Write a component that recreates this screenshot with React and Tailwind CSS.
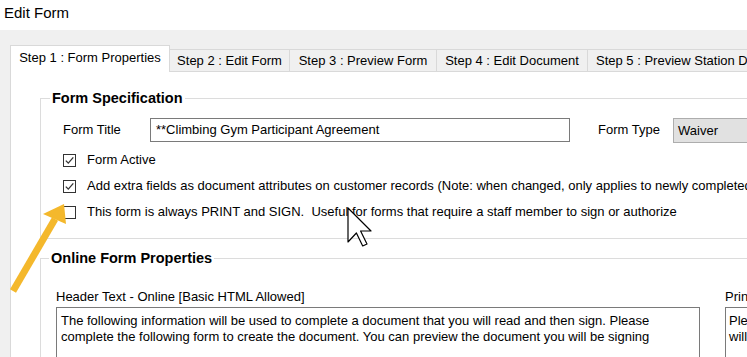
import React from 'react'

const TABS = [
  { label: 'Step 2 : Edit Form', w: 'w-[120px] text-center' },
  { label: 'Step 3 : Preview Form', w: 'w-[147px] text-center' },
  { label: 'Step 4 : Edit Document', w: 'w-[151px] text-center' },
  { label: 'Step 5 : Preview Station Document', w: 'w-[240px] text-left pl-[8px]' },
]

function Check({ checked }) {
  return (
    <span className="w-[13px] h-[13px] border border-[#333333] bg-white shrink-0 flex items-center justify-center">
      {checked && (
        <svg width="11" height="11" viewBox="0 0 11 11">
          <path d="M1.8 5.6 L4.3 8.1 L9.3 2.4" fill="none" stroke="#333333" strokeWidth="1.3" />
        </svg>
      )}
    </span>
  )
}

function CheckRow({ checked, children }) {
  return (
    <div className="h-[26px] flex items-center">
      <Check checked={checked} />
      <span className="ml-[11px] whitespace-nowrap">{children}</span>
    </div>
  )
}

export default function App() {
  return (
    <div className="relative w-[747px] h-[357px] overflow-hidden bg-white flex flex-col text-[13px] text-black font-['Liberation_Sans',Arial,sans-serif]">
      {/* window title */}
      <div className="h-[30px] pl-[4px] pt-[4px] text-[15px] leading-[18px] shrink-0">Edit Form</div>

      <div className="flex-1 bg-[#f0f0f0] pl-[10px] pt-[15px] flex flex-col">
        {/* tab strip */}
        <div className="flex items-end h-[26px] shrink-0">
          <div className="relative z-10 w-[160px] h-[27px] shrink-0 mb-[-1px] bg-white border border-b-0 border-[#d9d9d9] pt-[4px] leading-[16px] text-center whitespace-nowrap">
            Step 1 : Form Properties
          </div>
          {TABS.map(t => (
            <div
              key={t.label}
              className={`${t.w} h-[22px] shrink-0 bg-[#f0f0f0] border border-l-0 border-b-0 border-[#d9d9d9] pt-[3px] leading-[16px] whitespace-nowrap`}
            >
              {t.label}
            </div>
          ))}
        </div>

        {/* tab panel */}
        <div className="flex-1 bg-white border-t border-l border-[#d9d9d9] pl-[29px]">
          <fieldset className="mt-[18px] border-t border-l border-b border-[#dcdcdc]">
            <legend className="ml-[9px] px-[2px] text-[14.5px] font-bold leading-[16px]">Form Specification</legend>
            <div className="pt-[12px] pl-[22px] pb-[13px]">
              <div className="flex items-center h-[24px] whitespace-nowrap">
                <span className="w-[87px] shrink-0">Form Title</span>
                <div className="w-[420px] h-[24px] shrink-0 border border-[#7a7a7a] px-[5px] leading-[22px]">
                  **Climbing Gym Participant Agreement
                </div>
                <span className="ml-[28px] w-[75px] shrink-0">Form Type</span>
                <div className="w-[100px] h-[25px] shrink-0 bg-[#e1e1e1] border border-[#adadad] pl-[4px] leading-[23px]">
                  Waiver
                </div>
              </div>
              <div className="mt-[5px]">
                <CheckRow checked>Form Active</CheckRow>
                <CheckRow checked>
                  Add extra fields as document attributes on customer records (Note: when changed, only applies to newly completed documents)
                </CheckRow>
                <CheckRow>
                  This form is always PRINT and SIGN.&nbsp; Useful for forms that require a staff member to sign or authorize
                </CheckRow>
              </div>
            </div>
          </fieldset>

          <fieldset className="mt-[11px] border-t border-l border-[#dcdcdc]">
            <legend className="ml-[8px] px-[2px] text-[14.5px] font-bold leading-[16px]">Online Form Properties</legend>
            <div className="pt-[23px] pl-[15px] flex gap-[25px]">
              <div className="w-[644px] shrink-0">
                <div className="leading-[15px] whitespace-nowrap">Header Text - Online [Basic HTML Allowed]</div>
                <div className="mt-[3px] h-[80px] border border-[#7a7a7a] pt-[5px] px-[4px] leading-[16px]">
                  The following information will be used to complete a document that you will read and then sign. Please complete the following form to create the document. You can preview the document you will be signing
                </div>
              </div>
              <div className="w-[300px] shrink-0">
                <div className="leading-[15px] whitespace-nowrap">Print Header Text - Station</div>
                <div className="mt-[3px] h-[80px] border border-[#7a7a7a] pt-[5px] px-[3px] leading-[16px] whitespace-nowrap">
                  <div>Please complete the following form.</div>
                  <div>will be signing</div>
                </div>
              </div>
            </div>
          </fieldset>
        </div>
      </div>

      {/* annotation arrow and mouse cursor overlay */}
      <svg className="absolute inset-0 pointer-events-none" width="747" height="357" viewBox="0 0 747 357">
        <line x1="13" y1="291" x2="55" y2="219" stroke="#f4b82c" strokeWidth="7" />
        <polygon points="64,204 43,214 66,224" fill="#f4b82c" />
        <path
          d="M348 208 L348 242 L356.4 233 L362.7 246 L367 244 L360.6 231 L371 231 Z"
          fill="#ffffff"
          stroke="#000000"
          strokeWidth="1.2"
          strokeLinejoin="round"
        />
      </svg>
    </div>
  )
}
